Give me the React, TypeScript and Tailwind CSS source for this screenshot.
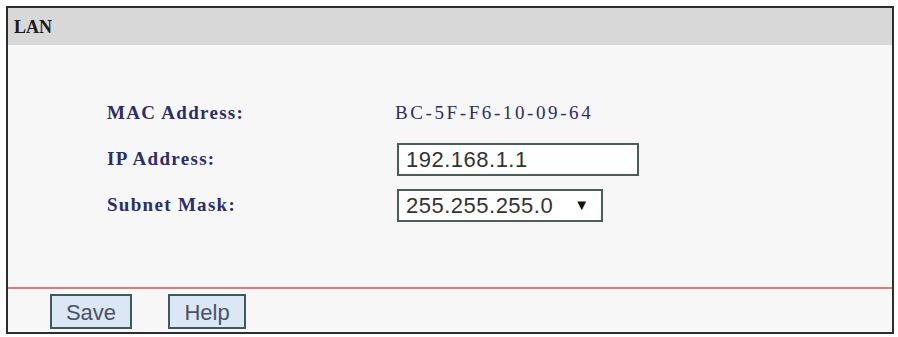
export default function App() {
  const rows = [
    { label: "MAC Address:", kind: "text", value: "BC-5F-F6-10-09-64" },
    { label: "IP Address:", kind: "input", value: "192.168.1.1" },
    { label: "Subnet Mask:", kind: "select", value: "255.255.255.0" },
  ];

  return (
    <div className="w-[898px] h-[337px] bg-white pt-[6px] pl-[6px]">
      <div className="w-[888px] h-[328px] border-2 border-[#2e2e2e] bg-[#f7f7f7] flex flex-col">
        {/* Header */}
        <div className="h-[37px] bg-[#d8d8d8] flex items-start pt-[6px] pl-[6px] text-[#1a1a1a] text-[18px] font-bold" style={{ fontFamily: '"Liberation Serif", serif' }}>
          LAN
        </div>

        {/* Content */}
        <div className="h-[242px] pt-[45px] pl-[99px]" style={{ fontFamily: '"Liberation Serif", serif' }}>
          {rows.map((r) => (
            <div key={r.label} className="h-[46px] flex items-center">
              <div className="w-[290px] text-[19px] text-[#2b2d6e] font-bold tracking-[1.3px]">{r.label}</div>
              {r.kind === "text" && (
                <div className="text-[19px] text-[#2b2d6e] tracking-[2.6px] -ml-[2px]">{r.value}</div>
              )}
              {r.kind === "input" && (
                <div className="w-[242px] h-[33px] border-2 border-[#4a5e5a] bg-white flex items-center pl-[7px] text-[22px] tracking-[0.5px] text-[#333]" style={{ fontFamily: '"Liberation Sans", Arial, sans-serif' }}>
                  {r.value}
                </div>
              )}
              {r.kind === "select" && (
                <div className="w-[206px] h-[33px] border-2 border-[#4a5e5a] bg-white flex items-center pl-[7px] text-[22px] tracking-[0.5px] text-[#333]" style={{ fontFamily: '"Liberation Sans", Arial, sans-serif' }}>
                  <span>{r.value}</span>
                  <span className="ml-[21px] text-[15px] text-[#111]">▼</span>
                </div>
              )}
            </div>
          ))}
        </div>

        {/* Divider */}
        <div className="h-[2px] bg-[#e07a7a]" />

        {/* Footer */}
        <div className="flex-1 flex items-start pt-[5px] pl-[42px] gap-[36px]" style={{ fontFamily: '"Liberation Sans", Arial, sans-serif' }}>
          <button className="w-[82px] h-[35px] border-2 border-[#3f5a5a] bg-[#dce7f5] text-[22px] text-[#4a5068]">Save</button>
          <button className="w-[78px] h-[35px] border-2 border-[#3f5a5a] bg-[#dce7f5] text-[22px] text-[#4a5068]">Help</button>
        </div>
      </div>
    </div>
  );
}
